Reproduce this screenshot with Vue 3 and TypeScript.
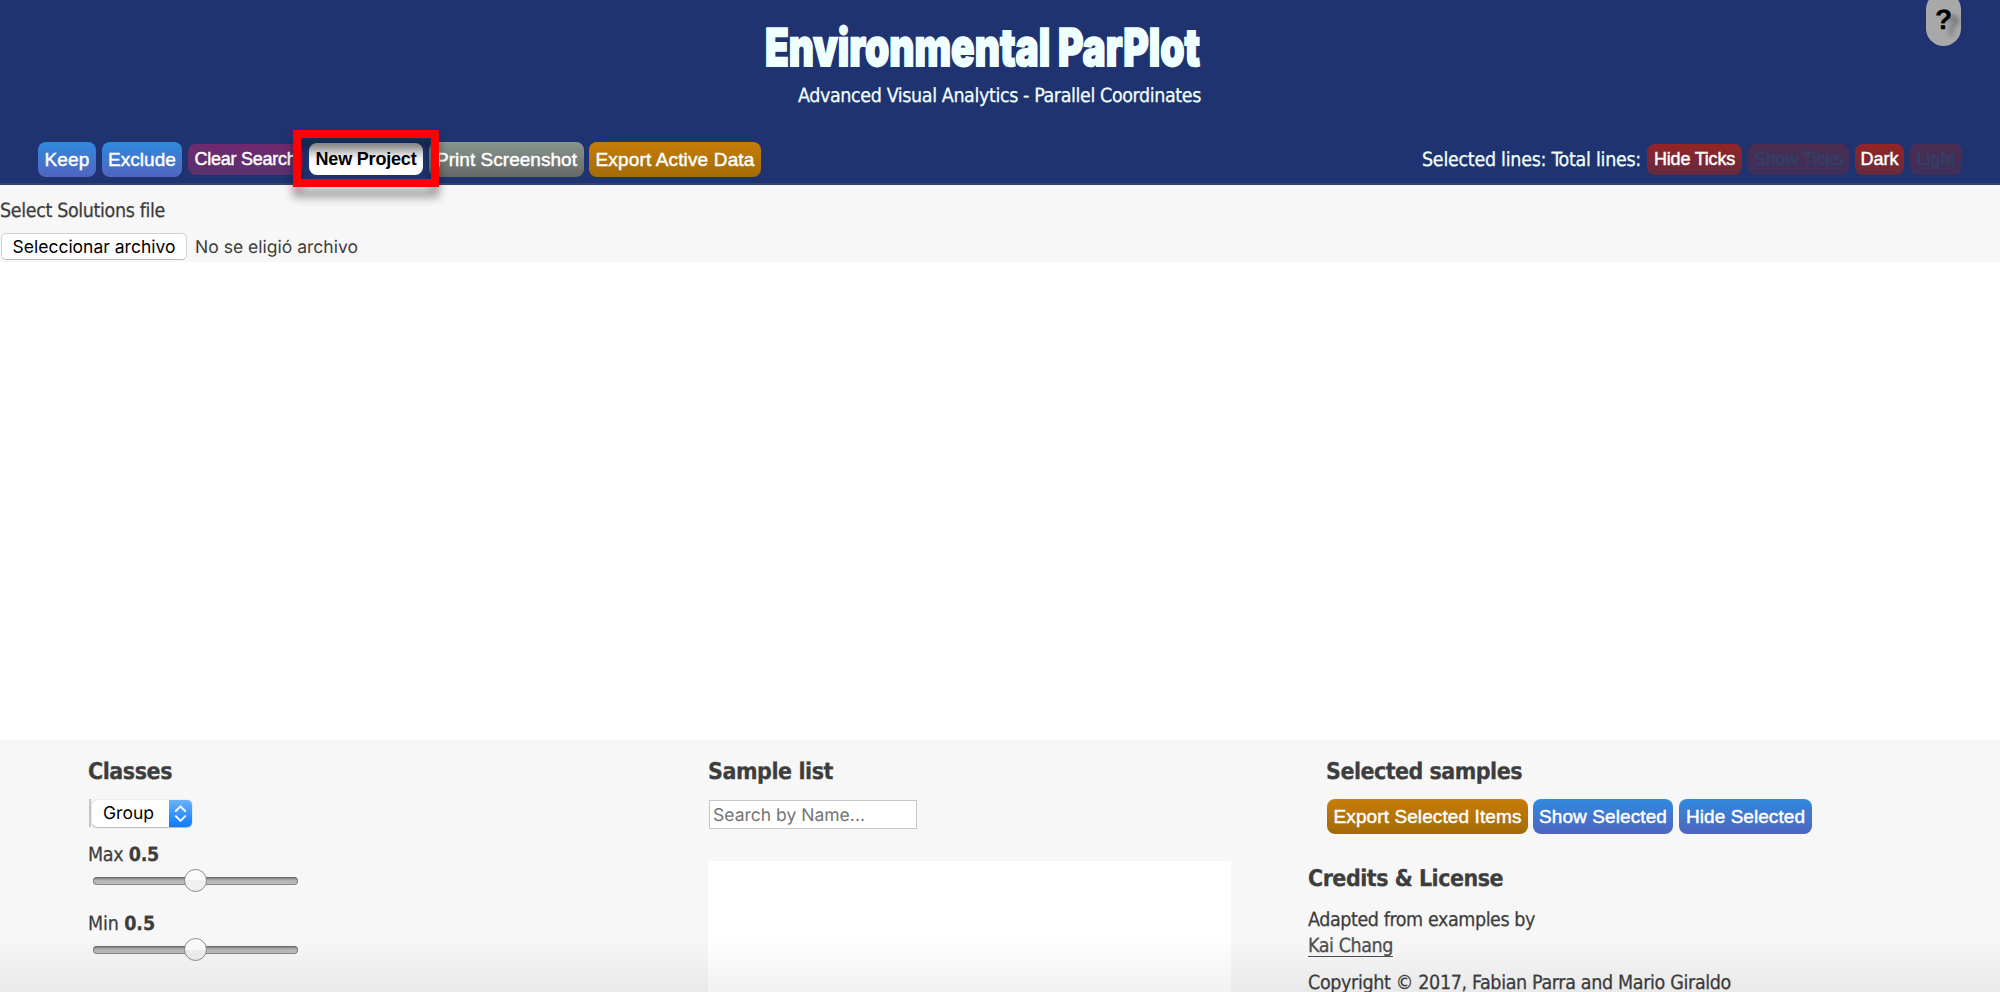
<script setup lang="ts">
import { ref } from 'vue'

interface Action {
  label: string
  kind: string
  width: number
  text: number
}

const actions: Action[] = [
  { label: 'Keep', kind: 'blue', width: 58, text: 45 },
  { label: 'Exclude', kind: 'blue', width: 80, text: 68 },
  { label: 'Clear Search', kind: 'purple small', width: 115, text: 102 },
  { label: 'New Project', kind: 'white small', width: 114, text: 101 },
  { label: 'Print Screenshot', kind: 'gray', width: 155, text: 141 },
  { label: 'Export Active Data', kind: 'orange', width: 172, text: 159 },
]

const toggles: Action[] = [
  { label: 'Hide Ticks', kind: 'red small', width: 95, text: 81 },
  { label: 'Show Ticks', kind: 'red small off', width: 101, text: 89 },
  { label: 'Dark', kind: 'red small', width: 49, text: 38 },
  { label: 'Light', kind: 'red small off', width: 52, text: 39 },
]

const selection: Action[] = [
  { label: 'Export Selected Items', kind: 'orange', width: 201, text: 188 },
  { label: 'Show Selected', kind: 'blue', width: 140, text: 128 },
  { label: 'Hide Selected', kind: 'blue', width: 133, text: 119 },
]

const sliders = ref([
  { name: 'Max', value: 0.5, text: 71 },
  { name: 'Min', value: 0.5, text: 67 },
])

// Tracks the text so that it fills the given width in pixels.
const vFit = {
  mounted(el: HTMLElement, binding: { value: number }) {
    const count = (el.textContent ?? '').length
    const natural = el.getBoundingClientRect().width
    el.style.letterSpacing = `${(binding.value - natural) / count}px`
  },
}
</script>

<template>
  <div class="page">
    <header class="header">
      <div class="brand">
        <svg class="title" width="440" height="56" viewBox="0 0 440 56">
          <text x="0" y="44.5" textLength="435" lengthAdjust="spacingAndGlyphs">Environmental ParPlot</text>
        </svg>
        <div class="subtitle"><span v-fit="403" class="fit">Advanced Visual Analytics - Parallel Coordinates</span></div>
      </div>
      <div class="help">?</div>
      <nav class="toolbar">
        <div class="group main">
          <button v-for="a in actions" :key="a.label" class="btn" :class="a.kind" :style="{ width: a.width + 'px' }">
            <span v-fit="a.text" class="fit">{{ a.label }}</span>
          </button>
        </div>
        <div class="group toggles">
          <span class="counts"><span v-fit="219" class="fit">Selected lines: Total lines:</span></span>
          <button v-for="a in toggles" :key="a.label" class="btn" :class="a.kind" :style="{ width: a.width + 'px' }">
            <span v-fit="a.text" class="fit">{{ a.label }}</span>
          </button>
        </div>
      </nav>
      <div class="frame"></div>
    </header>

    <section class="upload">
      <div class="line"><span v-fit="165" class="fit">Select Solutions file</span></div>
      <div class="file">
        <button class="native"><span v-fit="163" class="fit">Seleccionar archivo</span></button>
        <span v-fit="163" class="fit status">No se eligió archivo</span>
      </div>
    </section>

    <main class="canvas"></main>

    <footer class="footer">
      <section class="classes">
        <h3><span v-fit="84" class="fit">Classes</span></h3>
        <div class="select-wrap">
          <div class="select">
            <span v-fit="51" class="fit">Group</span>
            <span class="arrows">
              <svg width="23" height="27" viewBox="0 0 23 27">
                <path d="M6.8 11 L11.5 6.3 L16.2 11 M6.8 16.2 L11.5 20.9 L16.2 16.2" fill="none" stroke="#fff" stroke-width="1.9" stroke-linecap="round" stroke-linejoin="round" />
              </svg>
            </span>
          </div>
        </div>
        <div v-for="s in sliders" :key="s.name" class="range">
          <div class="line"><span v-fit="s.text" class="fit">{{ s.name }} <b>{{ s.value }}</b></span></div>
          <div class="track"><i class="thumb" :style="{ left: s.value * 100 + '%' }"></i></div>
        </div>
      </section>

      <section class="samples">
        <h3><span v-fit="125" class="fit">Sample list</span></h3>
        <div class="search"><span v-fit="152" class="fit">Search by Name...</span></div>
        <div class="list"></div>
      </section>

      <section class="selected">
        <h3 class="inset"><span v-fit="196" class="fit">Selected samples</span></h3>
        <div class="group inset picks">
          <button v-for="a in selection" :key="a.label" class="btn" :class="a.kind" :style="{ width: a.width + 'px' }">
            <span v-fit="a.text" class="fit">{{ a.label }}</span>
          </button>
        </div>
        <h3 class="credits"><span v-fit="195" class="fit">Credits &amp; License</span></h3>
        <p class="line"><span v-fit="227" class="fit">Adapted from examples by</span></p>
        <p class="line"><a v-fit="85" class="fit">Kai Chang</a></p>
        <p class="line copy"><span v-fit="423" class="fit">Copyright © 2017, Fabian Parra and Mario Giraldo</span></p>
      </section>
      <div class="shade"></div>
    </footer>
  </div>
</template>

<style>
body {
  margin: 0;
  overflow: hidden;
}
</style>

<style scoped>
.page {
  width: 2000px;
  height: 992px;
  overflow: hidden;
  display: flex;
  flex-direction: column;
  background: #fff;
  color: #3d3d3d;
  font-family: 'DejaVu Sans Condensed', 'DejaVu Sans', sans-serif;
  font-stretch: condensed;
  font-size: 19.5px;
  text-rendering: geometricPrecision;
  -webkit-text-stroke: 0.25px currentColor;
}
.fit {
  display: inline-block;
  white-space: pre;
}
.header {
  position: relative;
  height: 185px;
  box-sizing: border-box;
  flex: none;
  background: #1f3370;
  border-bottom: 2px solid #2f4570;
  color: azure;
}
.brand {
  width: 436px;
  padding: 21px 0 0 765px;
}
.title {
  display: block;
  overflow: visible;
}
.title text {
  font-family: Inter, 'Open Sans', sans-serif;
  font-size: 52px;
  font-weight: 900;
  fill: azure;
  stroke: azure;
  stroke-width: 1.8;
  -webkit-text-stroke: 1.8px azure;
}
.subtitle {
  display: flex;
  justify-content: flex-end;
  height: 30px;
  line-height: 30px;
  margin-top: 4px;
}
.help {
  position: absolute;
  left: 1926px;
  top: -8px;
  width: 35px;
  height: 54px;
  border-radius: 18px;
  background: #a9a9a9;
  color: #000;
  font: bold 28px/56px 'Liberation Sans', Arial, sans-serif;
  text-align: center;
  text-shadow: 8px 6px 5px rgba(0, 0, 0, 0.4);
}
.toolbar {
  display: flex;
  justify-content: space-between;
  height: 36px;
  padding: 0 38px;
  margin-top: 30px;
}
.group {
  display: flex;
  align-items: center;
  gap: 6px;
}
.main .btn:last-child {
  margin-left: -1px;
}
.btn {
  box-sizing: border-box;
  flex: none;
  display: flex;
  justify-content: center;
  align-items: center;
  height: 35px;
  padding: 0;
  border: 0;
  border-radius: 8px;
  color: #fff;
  font: 19px/35px 'Liberation Sans', Arial, sans-serif;
  -webkit-text-stroke: 0.45px currentColor;
}
.small {
  height: 31px;
  font-size: 18px;
  line-height: 32px;
}
.blue {
  background: linear-gradient(#2f8ade, #5065bf);
}
.purple {
  background: linear-gradient(#702a6e, #59326e);
}
.white {
  height: 32px;
  background: linear-gradient(#b5b5b5, #fff 60%);
  color: #000;
  font-weight: bold;
  -webkit-text-stroke: 0;
}
.gray {
  background: linear-gradient(#87968f, #666866);
}
.orange {
  background: linear-gradient(#c77c08, #a36c07);
}
.red {
  background: linear-gradient(#952424, #642b40);
}
.off {
  background: linear-gradient(#4d2c50, #3d305a);
  color: #30406a;
}
.counts {
  line-height: 35px;
}
.frame {
  position: absolute;
  left: 293px;
  top: 130px;
  width: 130px;
  height: 41px;
  border: 8px solid #f00;
  z-index: 3;
  filter: drop-shadow(0 10px 5px rgba(0, 0, 0, 0.4));
}
.upload {
  flex: none;
  height: 77px;
  background: #f7f7f7;
}
.line {
  margin: 0;
  height: 26px;
  line-height: 27px;
}
.upload .line {
  padding-top: 12px;
}
.file {
  display: flex;
  align-items: center;
  gap: 8px;
  padding: 10px 0 0 1px;
}
.native,
.status,
.select,
.search {
  font: 17.5px/29px Inter, Roboto, sans-serif;
  -webkit-text-stroke: 0;
}
.status {
  height: 27px;
}
.native {
  box-sizing: border-box;
  width: 186px;
  height: 27px;
  line-height: 26px;
  padding: 0;
  border: 1px solid #d2d2d2;
  border-bottom-color: #b8b8b8;
  border-radius: 5px;
  background: #fff;
  color: #000;
}
.canvas {
  flex: none;
  height: 478px;
}
.footer {
  position: relative;
  flex: none;
  height: 252px;
  display: flex;
  background: #f7f7f7;
}
h3 {
  margin: 0;
  padding-top: 17px;
  height: 30px;
  line-height: 31px;
  font-size: 23px;
  font-weight: bold;
}
.classes {
  width: 620px;
  padding-left: 88px;
}
.select-wrap {
  height: 28px;
  margin-top: 12px;
  margin-left: 1px;
  padding-left: 1px;
  border-left: 2px solid #c4c4c4;
  display: flex;
  align-items: center;
}
.select {
  display: flex;
  box-sizing: border-box;
  width: 100px;
  height: 27px;
  justify-content: space-between;
  padding-left: 11px;
  border-radius: 5px;
  overflow: hidden;
  background: #fff;
  color: #000;
  line-height: 28px;
  box-shadow: 0 0 1px #999, 0 1px 1px #bbb;
}
.arrows {
  width: 23px;
  height: 27px;
  background: linear-gradient(#6ab1fb, #0a7bff);
}
.arrows svg {
  display: block;
}
.range {
  height: 68.5px;
}
.select-wrap + .range {
  margin-top: 14px;
}
.track {
  position: relative;
  width: 205px;
  height: 8px;
  margin: 10px 0 0 5px;
  border-radius: 4px;
  background: linear-gradient(#747474, #b5b5b5 45%, #c0c0c0);
  box-shadow: inset 0 0 0 1px rgba(90, 90, 90, 0.55);
}
.thumb {
  position: absolute;
  top: -8px;
  width: 21px;
  height: 21px;
  margin-left: -12px;
  border: 1.5px solid #8b8b8b;
  border-radius: 50%;
  background: linear-gradient(#fbfbfb 50%, #efefef 50%);
}
.samples {
  width: 600px;
}
.search {
  box-sizing: border-box;
  width: 208px;
  height: 29px;
  margin: 13px 0 0 1px;
  padding-left: 3px;
  border: 1px solid #c6c6c6;
  background: #fff;
  color: #757575;
}
.list {
  width: 523px;
  height: 140px;
  margin-top: 32px;
  background: #fff;
}
.inset {
  margin-left: 19px;
}
h3.inset {
  margin-left: 18px;
}
.picks {
  margin-top: 12px;
}
.picks .btn:nth-child(2) {
  margin-left: -1px;
}
.credits {
  padding: 0;
  margin: 30px 0 12px;
}
.line a {
  color: #4d4d4d;
  line-height: 20px;
  border-bottom: 1px solid #4d4d4d;
}
.copy {
  margin-top: 11px;
}
.shade {
  position: absolute;
  inset: auto 0 0 0;
  height: 56px;
  background: linear-gradient(transparent, rgba(0, 0, 0, 0.055));
}
</style>
